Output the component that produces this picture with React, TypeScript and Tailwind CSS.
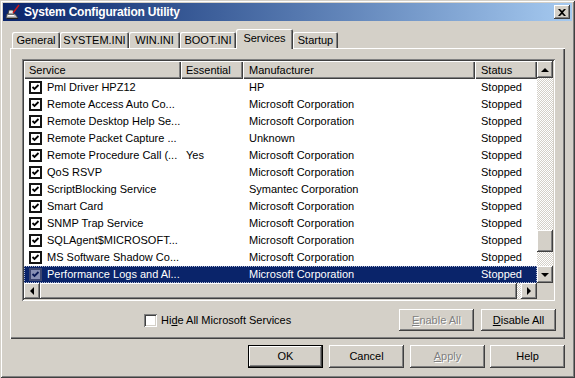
import React from "react";

const raised =
  "shadow-[inset_-1px_-1px_#404040,inset_1px_1px_#ffffff,inset_-2px_-2px_#808080,inset_2px_2px_#d4d0c8]";
const sunken =
  "shadow-[inset_1px_1px_#808080,inset_-1px_-1px_#ffffff,inset_2px_2px_#404040,inset_-2px_-2px_#d4d0c8]";
const checker =
  "bg-[repeating-conic-gradient(#d4d0c8_0_25%,#ffffff_0_50%)] bg-[length:2px_2px]";

type Row = { name: string; essential: string; maker: string; status: string };

const rows: Row[] = [
  { name: "Pml Driver HPZ12", essential: "", maker: "HP", status: "Stopped" },
  { name: "Remote Access Auto Co...", essential: "", maker: "Microsoft Corporation", status: "Stopped" },
  { name: "Remote Desktop Help Se...", essential: "", maker: "Microsoft Corporation", status: "Stopped" },
  { name: "Remote Packet Capture ...", essential: "", maker: "Unknown", status: "Stopped" },
  { name: "Remote Procedure Call (...", essential: "Yes", maker: "Microsoft Corporation", status: "Stopped" },
  { name: "QoS RSVP", essential: "", maker: "Microsoft Corporation", status: "Stopped" },
  { name: "ScriptBlocking Service", essential: "", maker: "Symantec Corporation", status: "Stopped" },
  { name: "Smart Card", essential: "", maker: "Microsoft Corporation", status: "Stopped" },
  { name: "SNMP Trap Service", essential: "", maker: "Microsoft Corporation", status: "Stopped" },
  { name: "SQLAgent$MICROSOFT...", essential: "", maker: "Microsoft Corporation", status: "Stopped" },
  { name: "MS Software Shadow Co...", essential: "", maker: "Microsoft Corporation", status: "Stopped" },
  { name: "Performance Logs and Al...", essential: "", maker: "Microsoft Corporation", status: "Stopped" },
];

const tabs = [
  { label: "General", w: "w-[48px]" },
  { label: "SYSTEM.INI", w: "w-[69px]" },
  { label: "WIN.INI", w: "w-[51px]" },
  { label: "BOOT.INI", w: "w-[56px]" },
  { label: "Services", w: "w-[57px]", active: true },
  { label: "Startup", w: "w-[45px]" },
];

function Arrow({ dir }: { dir: "up" | "down" | "left" | "right" }) {
  const pts = {
    up: "4,1 0,5 8,5",
    down: "0,1 8,1 4,5",
    left: "5,0 5,8 1,4",
    right: "1,0 1,8 5,4",
  }[dir];
  const horiz = dir === "left" || dir === "right";
  return (
    <svg width={horiz ? 6 : 8} height={horiz ? 8 : 6} viewBox={horiz ? "0 0 6 8" : "0 0 8 6"}>
      <polygon points={pts} fill="#000" />
    </svg>
  );
}

function ScrollBtn({ dir, cls }: { dir: "up" | "down" | "left" | "right"; cls: string }) {
  return (
    <div className={`${cls} bg-[#d4d0c8] flex items-center justify-center shrink-0 ${raised}`}>
      <Arrow dir={dir} />
    </div>
  );
}

function CheckMark({ color }: { color: string }) {
  return (
    <svg width="9" height="9" viewBox="0 0 9 9">
      <polyline points="1.5,4 3.5,6 7.5,2" fill="none" stroke={color} strokeWidth="1.8" />
    </svg>
  );
}

function Button({
  children,
  disabled,
  isDefault,
  cls,
}: {
  children: React.ReactNode;
  disabled?: boolean;
  isDefault?: boolean;
  cls: string;
}) {
  return (
    <div className={`${cls} shrink-0 ${isDefault ? "border border-black" : ""}`}>
      <div
        className={`w-full h-full bg-[#d4d0c8] flex items-center justify-center ${raised} ${
          disabled ? "text-[#808080] [text-shadow:1px_1px_0_#ffffff]" : "text-black"
        }`}
      >
        {children}
      </div>
    </div>
  );
}

export default function App() {
  return (
    <div
      className={`w-[575px] h-[378px] bg-[#d4d0c8] p-[3px] flex flex-col text-[11px] leading-none text-black font-['Liberation_Sans',Arial,sans-serif] shadow-[inset_1px_1px_#d4d0c8,inset_-1px_-1px_#404040,inset_2px_2px_#ffffff,inset_-2px_-2px_#808080] overflow-hidden`}
    >
      {/* Title bar */}
      <div className="h-[18px] shrink-0 flex items-center bg-gradient-to-r from-[#0a246a] to-[#a6caf0]">
        <svg width="16" height="16" viewBox="0 0 16 16" className="ml-[2px]">
          <polygon points="2,10 10,10 13,14 1,14" fill="#c8c8c8" stroke="#404040" strokeWidth="0.8" />
          <rect x="3" y="11" width="6" height="1" fill="#fff" />
          <polygon points="4,6 8,6 9,10 3,10" fill="#e8e8e8" stroke="#303030" strokeWidth="0.8" />
          <line x1="8" y1="9" x2="14" y2="1" stroke="#d01818" strokeWidth="1.4" />
          <rect x="2" y="14" width="11" height="1" fill="#202020" />
        </svg>
        <span className="ml-[3px] text-white font-bold text-[12px] tracking-[-0.2px]">
          System Configuration Utility
        </span>
        <div className="flex-1" />
        <div className={`w-[16px] h-[14px] mr-[2px] bg-[#d4d0c8] flex items-center justify-center ${raised}`}>
          <svg width="8" height="7" viewBox="0 0 8 7">
            <path d="M0 0h2l2 2 2-2h2L5 3.5 8 7H6L4 5 2 7H0l3-3.5z" fill="#000" />
          </svg>
        </div>
      </div>

      {/* Body */}
      <div className="flex-1 flex flex-col px-[7px]">
        {/* Tabs */}
        <div className="mt-[8px] h-[20px] flex items-end pl-[2px] relative z-10">
          {tabs.map((t) =>
            t.active ? (
              <div
                key={t.label}
                className={`${t.w} h-[20px] bg-[#d4d0c8] rounded-t-[2px] flex items-center justify-center pb-[2px] shadow-[inset_1px_1px_#ffffff,inset_-1px_0_#404040,inset_-2px_0_#808080]`}
              >
                {t.label}
              </div>
            ) : (
              <div
                key={t.label}
                className={`${t.w} h-[16px] mb-[1px] bg-[#d4d0c8] rounded-t-[2px] flex items-center justify-center pt-[1px] shadow-[inset_1px_1px_#ffffff,inset_-1px_0_#404040,inset_-2px_0_#808080]`}
              >
                {t.label}
              </div>
            )
          )}
        </div>

        {/* Tab panel */}
        <div className="-mt-[1px] h-[291px] shrink-0 flex flex-col pl-[12px] pt-[11px] shadow-[inset_1px_1px_#ffffff,inset_-1px_-1px_#404040,inset_-2px_-2px_#808080]">
          {/* List view */}
          <div className={`w-[533px] h-[242px] p-[2px] bg-white ${sunken}`}>
            <div className="flex">
              <div className="w-[513px] flex flex-col">
                {/* Header */}
                <div className="h-[18px] flex bg-[#d4d0c8]">
                  {[
                    { t: "Service", w: "w-[157px]", pl: "pl-[5px]" },
                    { t: "Essential", w: "w-[62px]", pl: "pl-[5px]" },
                    { t: "Manufacturer", w: "w-[232px]", pl: "pl-[6px]" },
                    { t: "Status", w: "w-[62px]", pl: "pl-[6px]" },
                  ].map((h) => (
                    <div
                      key={h.t}
                      className={`${h.w} ${h.pl} h-full flex items-center shadow-[inset_1px_1px_#ffffff,inset_-1px_-1px_#404040,inset_-2px_-2px_#808080]`}
                    >
                      {h.t}
                    </div>
                  ))}
                </div>
                {/* Rows */}
                {rows.map((r, i) => {
                  const sel = i === rows.length - 1;
                  return (
                    <div
                      key={r.name}
                      className={`h-[17px] flex items-center whitespace-nowrap ${
                        sel
                          ? "bg-[#0a246a] text-white outline outline-1 outline-dotted outline-[#b0b8d0] -outline-offset-1"
                          : ""
                      }`}
                    >
                      <div className="w-[157px] flex items-center pl-[5px] gap-[5px] overflow-hidden">
                        <div
                          className={`w-[13px] h-[13px] shrink-0 border-2 flex items-center justify-center ${
                            sel ? "bg-[#8891b4] border-[#3c4670]" : "bg-white border-[#141414]"
                          }`}
                        >
                          <CheckMark color={sel ? "#0a1a55" : "#000"} />
                        </div>
                        <span>{r.name}</span>
                      </div>
                      <div className="w-[62px] pl-[5px]">{r.essential}</div>
                      <div className="w-[232px] pl-[6px]">{r.maker}</div>
                      <div className="w-[62px] pl-[6px]">{r.status}</div>
                    </div>
                  );
                })}
              </div>
              {/* Vertical scrollbar */}
              <div className={`w-[16px] h-[222px] flex flex-col ${checker}`}>
                <ScrollBtn dir="up" cls="w-[16px] h-[17px]" />
                <div className={`mt-[152px] w-[16px] h-[22px] bg-[#d4d0c8] ${raised}`} />
                <div className="flex-1" />
                <ScrollBtn dir="down" cls="w-[16px] h-[17px]" />
              </div>
            </div>
            {/* Horizontal scrollbar */}
            <div className="h-[16px] flex">
              <div className={`w-[513px] h-full flex ${checker}`}>
                <ScrollBtn dir="left" cls="w-[16px] h-[16px]" />
                <div className={`w-[477px] h-full bg-[#d4d0c8] ${raised}`} />
                <div className="flex-1" />
                <ScrollBtn dir="right" cls="w-[16px] h-[16px]" />
              </div>
              <div className="w-[16px] h-full bg-[#d4d0c8]" />
            </div>
          </div>

          {/* Bottom row in panel */}
          <div className="mt-[8px] h-[22px] flex items-center">
            <div
              className={`ml-[122px] w-[13px] h-[13px] bg-white shadow-[inset_1px_1px_#808080,inset_-1px_-1px_#ffffff,inset_2px_2px_#404040,inset_-2px_-2px_#d4d0c8]`}
            />
            <span className="ml-[4px]">
              Hi<span className="underline">d</span>e All Microsoft Services
            </span>
            <div className="flex-1" />
            <Button cls="w-[75px] h-[22px]" disabled>
              <span>
                <span className="underline">E</span>nable All
              </span>
            </Button>
            <Button cls="w-[75px] h-[22px] ml-[7px] mr-[9px]">
              <span>
                <span className="underline">D</span>isable All
              </span>
            </Button>
          </div>
        </div>

        {/* Dialog buttons */}
        <div className="mt-[6px] flex justify-end">
          <Button cls="w-[75px] h-[23px]" isDefault>
            OK
          </Button>
          <Button cls="w-[75px] h-[23px] ml-[6px]">Cancel</Button>
          <Button cls="w-[75px] h-[23px] ml-[6px]" disabled>
            <span>
              <span className="underline">A</span>pply
            </span>
          </Button>
          <Button cls="w-[75px] h-[23px] ml-[5px]">Help</Button>
        </div>
      </div>
    </div>
  );
}
